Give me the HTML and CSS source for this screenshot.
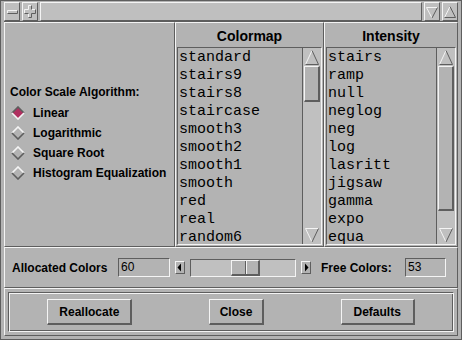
FILE: index.html
```html
<!DOCTYPE html>
<html lang="en">
<head>
    <meta charset="UTF-8">
    <title>Color Table</title>
    <link rel="stylesheet" href="styles.css">
</head>
<body>

<div class="window">
    <div class="titlebar">
        <span class="tb-btn">
            <svg width="14" height="17" viewBox="0 0 14 17">
                <path d="M2.5 10.5 V7.5 H12.5" stroke="#f4f4f4" fill="none"/>
                <path d="M12.5 7.5 V10.5 H2.5" stroke="#5e5e5e" fill="none"/>
            </svg>
        </span>
        <span class="tb-btn">
            <svg width="14" height="17" viewBox="0 0 14 17">
                <path d="M1.5 10.5 V6.5 H5.5 V2.5 H8.5 M8.5 6.5 H12.5 M5.5 14.5 V10.5" stroke="#f4f4f4" fill="none"/>
                <path d="M8.5 2.5 V6.5 M12.5 6.5 V10.5 H8.5 V14.5 H5.5 M5.5 10.5 H1.5" stroke="#5e5e5e" fill="none"/>
            </svg>
        </span>
        <span class="tb-title"></span>
        <span class="tb-btn">
            <svg width="14" height="17" viewBox="0 0 14 17">
                <path d="M7 15 L1.5 4.5 H12.5" stroke="#f4f4f4" fill="none"/>
                <path d="M12.5 4.5 L7 15" stroke="#5e5e5e" fill="none"/>
            </svg>
        </span>
        <span class="tb-btn">
            <svg width="14" height="17" viewBox="0 0 14 17">
                <path d="M1.5 14.5 L7 3.5" stroke="#f4f4f4" fill="none"/>
                <path d="M7 3.5 L12.5 14.5 H1.5" stroke="#5e5e5e" fill="none"/>
            </svg>
        </span>
    </div>

    <div class="client">
        <div class="top">
            <div class="algo raised">
                <div class="algo-title">Color Scale Algorithm:</div>
                <div class="radio">
                    <svg width="14" height="14" viewBox="0 0 14 14">
                        <polygon points="7,1 13,7 7,13 1,7" fill="#b03060"/>
                        <path d="M1 7 L7 1 L13 7" stroke="#5e5e5e" stroke-width="1.6" fill="none"/>
                        <path d="M1 7 L7 13 L13 7" stroke="#f4f4f4" stroke-width="1.6" fill="none"/>
                    </svg>
                    <span>Linear</span>
                </div>
                <div class="radio">
                    <svg width="14" height="14" viewBox="0 0 14 14">
                        <path d="M1 7 L7 1 L13 7" stroke="#f4f4f4" stroke-width="1.6" fill="none"/>
                        <path d="M1 7 L7 13 L13 7" stroke="#5e5e5e" stroke-width="1.6" fill="none"/>
                    </svg>
                    <span>Logarithmic</span>
                </div>
                <div class="radio">
                    <svg width="14" height="14" viewBox="0 0 14 14">
                        <path d="M1 7 L7 1 L13 7" stroke="#f4f4f4" stroke-width="1.6" fill="none"/>
                        <path d="M1 7 L7 13 L13 7" stroke="#5e5e5e" stroke-width="1.6" fill="none"/>
                    </svg>
                    <span>Square Root</span>
                </div>
                <div class="radio">
                    <svg width="14" height="14" viewBox="0 0 14 14">
                        <path d="M1 7 L7 1 L13 7" stroke="#f4f4f4" stroke-width="1.6" fill="none"/>
                        <path d="M1 7 L7 13 L13 7" stroke="#5e5e5e" stroke-width="1.6" fill="none"/>
                    </svg>
                    <span>Histogram Equalization</span>
                </div>
            </div>

            <div class="list-panel colormap raised">
                <div class="list-head">Colormap</div>
                <div class="list-box">
                    <div class="list-items">
                        <div>standard</div>
                        <div>stairs9</div>
                        <div>stairs8</div>
                        <div>staircase</div>
                        <div>smooth3</div>
                        <div>smooth2</div>
                        <div>smooth1</div>
                        <div>smooth</div>
                        <div>red</div>
                        <div>real</div>
                        <div>random6</div>
                    </div>
                    <div class="scrollbar">
                        <svg class="sb-arrow" width="16" height="16" viewBox="0 0 16 16">
                            <path d="M1.5 15.5 L8 1.5" stroke="#f4f4f4" fill="none"/>
                            <path d="M8 1.5 L14.5 15.5 H1.5" stroke="#5e5e5e" fill="none"/>
                        </svg>
                        <div class="sb-trough">
                            <div class="sb-thumb" style="height: 36px"></div>
                        </div>
                        <svg class="sb-arrow" width="16" height="16" viewBox="0 0 16 16">
                            <path d="M8 15 L1.5 1.5 H14.5" stroke="#f4f4f4" fill="none"/>
                            <path d="M14.5 1.5 L8 15" stroke="#5e5e5e" fill="none"/>
                        </svg>
                    </div>
                </div>
            </div>

            <div class="list-panel intensity raised">
                <div class="list-head">Intensity</div>
                <div class="list-box">
                    <div class="list-items">
                        <div>stairs</div>
                        <div>ramp</div>
                        <div>null</div>
                        <div>neglog</div>
                        <div>neg</div>
                        <div>log</div>
                        <div>lasritt</div>
                        <div>jigsaw</div>
                        <div>gamma</div>
                        <div>expo</div>
                        <div>equa</div>
                    </div>
                    <div class="scrollbar">
                        <svg class="sb-arrow" width="16" height="16" viewBox="0 0 16 16">
                            <path d="M1.5 15.5 L8 1.5" stroke="#f4f4f4" fill="none"/>
                            <path d="M8 1.5 L14.5 15.5 H1.5" stroke="#5e5e5e" fill="none"/>
                        </svg>
                        <div class="sb-trough">
                            <div class="sb-thumb" style="height: 145px"></div>
                        </div>
                        <svg class="sb-arrow" width="16" height="16" viewBox="0 0 16 16">
                            <path d="M8 15 L1.5 1.5 H14.5" stroke="#f4f4f4" fill="none"/>
                            <path d="M14.5 1.5 L8 15" stroke="#5e5e5e" fill="none"/>
                        </svg>
                    </div>
                </div>
            </div>
        </div>

        <div class="alloc raised">
            <span class="alloc-label">Allocated Colors</span>
            <span class="field wide">60</span>
            <span class="step-btn">
                <svg width="8" height="11" viewBox="0 0 8 11"><polygon points="5,1.5 5,9.5 1.5,5.5" fill="#000"/></svg>
            </span>
            <span class="trough">
                <span class="slider-thumb" style="margin-left: 40px"></span>
            </span>
            <span class="step-btn">
                <svg width="8" height="11" viewBox="0 0 8 11"><polygon points="3,1.5 3,9.5 6.5,5.5" fill="#000"/></svg>
            </span>
            <span class="free-label">Free Colors:</span>
            <span class="field narrow">53</span>
        </div>

        <div class="actions raised">
            <div class="actions-inner">
                <button class="btn btn-realloc">Reallocate</button>
                <button class="btn btn-close">Close</button>
                <button class="btn btn-defaults">Defaults</button>
            </div>
        </div>
    </div>
</div>

</body>
</html>
```

FILE: styles.css
```css
* {
    box-sizing: border-box;
}
body {
    margin: 0;
    background: #b3b3b3;
    font-family: "Liberation Sans", Arial, sans-serif;
    font-size: 12px;
    font-weight: bold;
    color: black;
}
.window {
    width: 462px;
    height: 340px;
    background: #b3b3b3;
    border: 1px solid #5e5e5e;
    padding: 1px 3px 3px;
    display: flex;
    flex-direction: column;
}
.titlebar {
    height: 19px;
    flex: none;
    display: flex;
    gap: 2px;
}
.tb-btn {
    width: 16px;
    background: #bfbfbf;
    border: 1px solid;
    border-color: #f4f4f4 #5e5e5e #5e5e5e #f4f4f4;
    display: flex;
    align-items: center;
    justify-content: center;
}
.tb-title {
    flex: 1;
    background: #bfbfbf;
    border: 1px solid;
    border-color: #f4f4f4 #5e5e5e #5e5e5e #f4f4f4;
}
.client {
    flex: 1;
    min-height: 0;
    display: flex;
    flex-direction: column;
    border-top: 1px solid #5e5e5e;
}
.raised {
    border: 1px solid;
    border-color: #f4f4f4 #5e5e5e #5e5e5e #f4f4f4;
}
.top {
    height: 225px;
    flex: none;
    display: flex;
}
.algo {
    width: 171px;
    padding: 61px 0 0 5px;
}
.algo-title {
    line-height: 16px;
    margin-bottom: 3px;
}
.radio {
    display: flex;
    align-items: center;
    height: 20px;
    padding-left: 1px;
    gap: 8px;
}
.radio svg {
    display: block;
}
.list-panel {
    display: flex;
    flex-direction: column;
    min-height: 0;
}
.colormap {
    width: 149px;
}
.intensity {
    width: 134px;
}
.list-head {
    height: 24px;
    flex: none;
    line-height: 24px;
    padding-top: 1px;
    text-align: center;
    font-size: 14px;
}
.list-box {
    flex: 1;
    min-height: 0;
    overflow: hidden;
    display: flex;
    margin: 0 1px 1px;
    border: 1px solid;
    border-color: #5e5e5e #f4f4f4 #f4f4f4 #5e5e5e;
}
.list-items {
    flex: 1;
    overflow: hidden;
    padding: 1px 0 0 1px;
    font-family: "Liberation Mono", "Courier New", monospace;
    font-size: 15px;
    font-weight: normal;
    line-height: 18px;
}
.scrollbar {
    width: 19px;
    background: #c0c0c0;
    border-left: 1px solid #5e5e5e;
    padding: 1px;
    display: flex;
    flex-direction: column;
}
.sb-arrow {
    display: block;
    flex: none;
}
.sb-trough {
    flex: 1;
    min-height: 0;
    padding-top: 1px;
}
.sb-thumb {
    background: #b3b3b3;
    border: 1px solid;
    border-width: 1px 2px 2px 1px;
    border-color: #f4f4f4 #5e5e5e #5e5e5e #f4f4f4;
}
.alloc {
    height: 41px;
    flex: none;
    display: flex;
    align-items: center;
    padding-left: 7px;
}
.alloc-label {
    width: 106px;
}
.field {
    height: 19px;
    border: 1px solid;
    border-color: #5e5e5e #f4f4f4 #f4f4f4 #5e5e5e;
    font-weight: normal;
    line-height: 17px;
    padding-left: 2px;
}
.field.wide {
    width: 52px;
}
.field.narrow {
    width: 41px;
}
.step-btn {
    width: 10px;
    height: 13px;
    margin-left: 5px;
    border: 1px solid;
    border-color: #f4f4f4 #5e5e5e #5e5e5e #f4f4f4;
    display: flex;
    align-items: center;
    justify-content: center;
}
.trough {
    width: 106px;
    height: 18px;
    margin-left: 5px;
    background: #c0c0c0;
    border: 1px solid;
    border-color: #5e5e5e #f4f4f4 #f4f4f4 #5e5e5e;
    display: flex;
}
.slider-thumb {
    width: 29px;
    background: #b3b3b3;
    border: 1px solid;
    border-width: 1px 2px 2px 1px;
    border-color: #f4f4f4 #5e5e5e #5e5e5e #f4f4f4;
    background-image: linear-gradient(to right, transparent 13px, #5e5e5e 13px, #5e5e5e 14px, #f4f4f4 14px, #f4f4f4 15px, transparent 15px);
}
.free-label {
    width: 84px;
    margin-left: 10px;
}
.actions {
    flex: 1;
    padding: 3px;
}
.actions-inner {
    height: 100%;
    border: 1px solid;
    border-color: #5e5e5e #f4f4f4 #f4f4f4 #5e5e5e;
    box-shadow: inset 1px 1px 0 #f4f4f4, inset -1px -1px 0 #5e5e5e;
    display: flex;
    align-items: center;
    justify-content: space-around;
}
.btn {
    height: 26px;
    padding: 0;
    background: #b3b3b3;
    font-family: "Liberation Sans", Arial, sans-serif;
    font-size: 12px;
    font-weight: bold;
    color: black;
    border: solid;
    border-width: 1px 2px 2px 1px;
    border-color: #f4f4f4 #5e5e5e #5e5e5e #f4f4f4;
}
.btn-realloc {
    width: 85px;
}
.btn-close {
    width: 55px;
}
.btn-defaults {
    width: 74px;
}
```
